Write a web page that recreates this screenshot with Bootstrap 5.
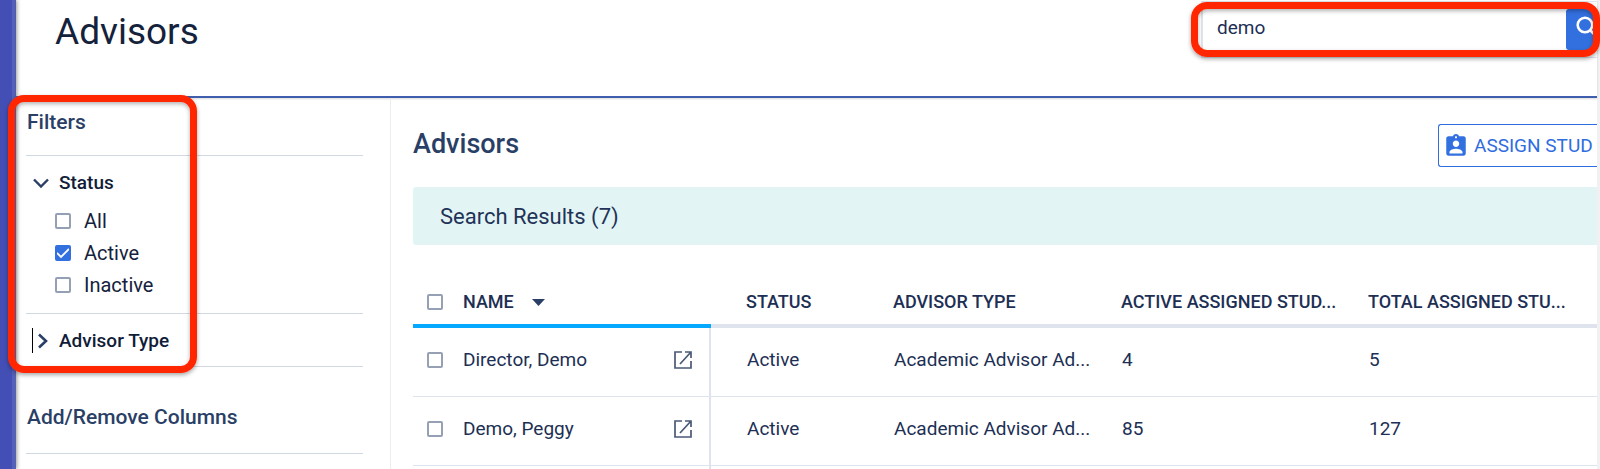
<!DOCTYPE html>
<html lang="en">
<head>
<meta charset="utf-8">
<meta name="viewport" content="width=device-width, initial-scale=1">
<title>Advisors</title>
<link href="https://cdn.jsdelivr.net/npm/bootstrap@5.3.0/dist/css/bootstrap.min.css" rel="stylesheet">
<style>
  body { font-family: Roboto, "Liberation Sans", sans-serif; font-size: 19px; line-height: 24px; color: #1d2f54; background: #fff; overflow: hidden; }
  .rail { width: 16px; background: #434fb5; border-right: 4px solid #5560b8; box-shadow: 1px 0 4px rgba(0,0,0,.4); }
  .page-edge { border-right: 3px solid #f1f1f3; }
  .topbar { height: 98px; border-bottom: 2px solid #3f5fae; box-shadow: 0 1px 2px rgba(0,0,0,.15); padding-left: 39px; }
  .topbar h1 { font-size: 37px; line-height: 44px; font-weight: 400; color: #14223c; margin-top: 10px; }
  .search { width: 396px; height: 57px; margin-top: 1px; padding: 7px 0; border: 1px solid #e1e4ea; border-left-width: 2px; border-right: 0; }
  .search input { border: 0; padding: 0 0 3px 14px; font-size: 19px; color: #1d2f54; min-width: 0; outline: 0; }
  .search button { width: 31px; border: 0; padding: 0 0 8px 9px; background: #3370df; border-radius: 3px 0 0 3px; overflow: hidden; line-height: 0; }
  .callout { position: absolute; border: 7px solid #ff2600; border-radius: 16px; pointer-events: none; box-shadow: 0 2px 4px rgba(0,0,0,.35), inset 0 2px 4px rgba(0,0,0,.3); }
  .callout-search { left: -12px; right: -3px; top: 0; height: 55px; }
  .callout-filters { left: -18px; top: -3px; bottom: -6px; width: 189px; }
  .sidebar { width: 375px; border-right: 1px solid #ededf0; padding: 0 27px 0 10px; }
  .side-title { font-size: 21px; line-height: 24px; font-weight: 500; color: #2a3f66; margin: 0; padding: 12px 0 21px 1px; }
  .side-title-columns { padding: 38px 0 24px 1px; }
  .side-rule { border-bottom: 1px solid #d0d8e3; }
  .filter-status { padding: 15px 0 12px; }
  .filter-type { padding: 14px 0 13px; }
  .toggle { background: none; border: 0; padding: 0 0 0 7px; font-weight: 500; color: #111d38; line-height: 24px; gap: 10px; }
  .toggle-closed { padding-left: 6px; gap: 4px; }
  .toggle-closed svg { margin-right: 6px; }
  .opts { padding-top: 10px; font-size: 20px; }
  .opt { height: 32px; gap: 13px; padding-left: 29px; color: #14223c; }
  .tick { appearance: none; flex: none; width: 16px; height: 16px; margin: 0; border: 2px solid #96a0b5; border-radius: 2px; background: #fff; display: block; }
  .tick:checked { border-color: #3370df; background: #3370df url("data:image/svg+xml,%3Csvg xmlns='http://www.w3.org/2000/svg' viewBox='0 0 12 12'%3E%3Cpath d='M0 6l4 4L12 2' fill='none' stroke='white' stroke-width='1.8'/%3E%3C/svg%3E") center/12px no-repeat; }
  .caret-bar { width: 1px; height: 25px; background: #000; }
  .content-pane { padding: 26px 0 0 22px; min-width: 0; overflow: hidden; }
  .content-pane h2 { font-size: 27px; line-height: 32px; font-weight: 500; color: #2a3f66; }
  .assign { height: 43px; width: 159px; padding: 0 0 0 4px; gap: 5px; background: #fff; border: 1px solid #2f6ce0; border-right: 0; border-radius: 3px 0 0 3px; color: #2f6ce0; white-space: nowrap; overflow: hidden; }
  .results { background: #e3f4f4; border-radius: 3px 0 0 3px; font-size: 22px; line-height: 28px; padding: 16px 27px 14px; margin-top: 20px; color: #1f3358; }
  .grid { table-layout: fixed; width: 100%; margin-top: 29px; border-collapse: separate; border-spacing: 0; white-space: nowrap; }
  .grid th { height: 54px; font-size: 18px; font-weight: 500; padding: 6px 0 0 35px; border-bottom: 4px solid #dfe3ed; }
  .grid td { height: 69px; padding: 0 0 4px 36px; border-bottom: 1px solid #dfe3ed; }
  .grid th:first-child { padding-left: 14px; border-bottom-color: #05a9ff; }
  .grid td:first-child { padding: 0 16px 4px 14px; border-right: 2px solid #dfe3ed; }
  .gap-name { gap: 20px; }
  .c-name { width: 298px; } .c-status { width: 147px; } .c-type { width: 228px; } .c-active { width: 247px; }
  .sort { gap: 18px; background: none; border: 0; padding: 0; font-weight: 500; color: inherit; }
</style>
</head>
<body>
<div class="d-flex vh-100">
  <div class="rail flex-shrink-0"></div>
  <div class="page-edge flex-grow-1 d-flex flex-column">
    <header class="topbar d-flex justify-content-between align-items-start flex-shrink-0">
      <h1 class="mb-0">Advisors</h1>
      <form class="search d-flex position-relative" role="search">
        <input class="flex-grow-1" type="text" value="demo" aria-label="Search advisors">
        <button type="button" aria-label="Search">
          <svg width="22" height="22" viewBox="0 0 22 22" fill="none" stroke="#fff" stroke-width="2.6"><circle cx="10" cy="10" r="7.3"/><path d="M15 15l6 6"/></svg>
        </button>
        <div class="callout callout-search"></div>
      </form>
    </header>
    <div class="d-flex flex-grow-1">
      <aside class="sidebar flex-shrink-0">
        <section class="position-relative">
          <h3 class="side-title side-rule">Filters</h3>
          <div class="side-rule filter-status">
            <button type="button" class="toggle d-flex align-items-center" aria-expanded="true">
              <svg width="16" height="16" viewBox="0 0 16 16" fill="none" stroke="#2a3f66" stroke-width="2.4"><path d="M1 4.500l7 7 7-7"/></svg>
              Status
            </button>
            <div class="opts">
              <label class="opt d-flex align-items-center"><input class="tick" type="checkbox">All</label>
              <label class="opt d-flex align-items-center"><input class="tick" type="checkbox" checked>Active</label>
              <label class="opt d-flex align-items-center"><input class="tick" type="checkbox">Inactive</label>
            </div>
          </div>
          <div class="side-rule filter-type">
            <button type="button" class="toggle toggle-closed d-flex align-items-center" aria-expanded="false">
              <span class="caret-bar"></span>
              <svg width="12" height="16" viewBox="0 0 12 16" fill="none" stroke="#2a3f66" stroke-width="2.6"><path d="M2 1.500L9 8l-7 6.500"/></svg>
              Advisor Type
            </button>
          </div>
          <div class="callout callout-filters"></div>
        </section>
        <h3 class="side-title side-title-columns side-rule">Add/Remove Columns</h3>
      </aside>
      <main class="content-pane flex-grow-1">
        <div class="d-flex justify-content-between align-items-center">
          <h2 class="mb-1">Advisors</h2>
          <button type="button" class="assign d-flex align-items-center">
            <svg class="flex-shrink-0" width="26" height="26" viewBox="0 0 24 24" fill="#3370df"><path d="M19 3h-4.180C14.400 1.840 13.300 1 12 1c-1.300 0-2.400.84-2.820 2H5c-1.100 0-2 .9-2 2v14c0 1.100.9 2 2 2h14c1.100 0 2-.9 2-2V5c0-1.100-.9-2-2-2zm-7 0c.55 0 1 .45 1 1s-.45 1-1 1-1-.45-1-1 .45-1 1-1zm0 4c1.660 0 3 1.340 3 3s-1.340 3-3 3-3-1.340-3-3 1.340-3 3-3zm6 12H6v-1.400c0-2 4-3.100 6-3.100s6 1.100 6 3.100V19z"/></svg>
            <span>ASSIGN STUD</span>
          </button>
        </div>
        <div class="results">Search Results (7)</div>
        <table class="grid">
          <colgroup><col class="c-name"><col class="c-status"><col class="c-type"><col class="c-active"><col></colgroup>
          <thead>
            <tr>
              <th scope="col">
                <div class="d-flex align-items-center gap-name">
                  <input class="tick" type="checkbox" aria-label="Select all">
                  <button type="button" class="sort d-flex align-items-center">NAME <svg width="13" height="7" viewBox="0 0 13 7" fill="#2a3f66"><path d="M0 0h13L6.500 7z"/></svg></button>
                </div>
              </th>
              <th scope="col">STATUS</th>
              <th scope="col">ADVISOR TYPE</th>
              <th scope="col">ACTIVE ASSIGNED STUD...</th>
              <th scope="col">TOTAL ASSIGNED STU...</th>
            </tr>
          </thead>
          <tbody>
            <tr>
              <td>
                <div class="d-flex align-items-center gap-name">
                  <input class="tick" type="checkbox" aria-label="Select Director, Demo">
                  <span class="flex-grow-1">Director, Demo</span>
                  <a href="#" class="lh-1" aria-label="Open Director, Demo"><svg class="d-block" width="20" height="20" viewBox="0 0 20 20" fill="none" stroke="#4a5975" stroke-width="1.7"><path d="M9 2H2v16h16v-7M12 2h6v6M18 2L7 14"/></svg></a>
                </div>
              </td>
              <td>Active</td><td>Academic Advisor Ad...</td><td>4</td><td>5</td>
            </tr>
            <tr>
              <td>
                <div class="d-flex align-items-center gap-name">
                  <input class="tick" type="checkbox" aria-label="Select Demo, Peggy">
                  <span class="flex-grow-1">Demo, Peggy</span>
                  <a href="#" class="lh-1" aria-label="Open Demo, Peggy"><svg class="d-block" width="20" height="20" viewBox="0 0 20 20" fill="none" stroke="#4a5975" stroke-width="1.7"><path d="M9 2H2v16h16v-7M12 2h6v6M18 2L7 14"/></svg></a>
                </div>
              </td>
              <td>Active</td><td>Academic Advisor Ad...</td><td>85</td><td>127</td>
            </tr>
            <tr><td></td><td></td><td></td><td></td><td></td></tr>
          </tbody>
        </table>
      </main>
    </div>
  </div>
</div>
<script src="https://cdn.jsdelivr.net/npm/bootstrap@5.3.0/dist/js/bootstrap.bundle.min.js"></script>
</body>
</html>
